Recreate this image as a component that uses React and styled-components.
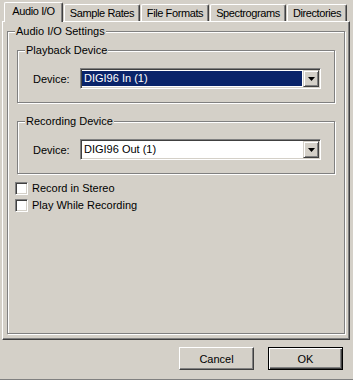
import React from "react";
import styled, { createGlobalStyle } from "styled-components";

const GlobalStyle = createGlobalStyle`
  html, body {
    margin: 0;
    padding: 0;
    background: #d4d0c8;
  }
  body {
    font-family: "Liberation Sans", Arial, sans-serif;
    font-size: 11px;
    color: #000;
  }
`;

const tabs = [
  { label: "Audio I/O", width: 59, active: true },
  { label: "Sample Rates", width: 76 },
  { label: "File Formats", width: 68 },
  { label: "Spectrograms", width: 76 },
  { label: "Directories", width: 60 },
];

function ComboBox({ value, selected }) {
  return (
    <StCombo>
      <StComboText $selected={selected}>{value}</StComboText>
      <StDropButton>
        <svg width="7" height="4" viewBox="0 0 7 4">
          <path d="M0 0h7L3.5 4z" fill="#000" />
        </svg>
      </StDropButton>
    </StCombo>
  );
}

function DeviceGroup({ title, value, selected }) {
  return (
    <StGroup $inner>
      <StLegend>{title}</StLegend>
      <StDeviceRow>
        <StLabel>Device:</StLabel>
        <ComboBox value={value} selected={selected} />
      </StDeviceRow>
    </StGroup>
  );
}

function App() {
  return (
    <StDialog>
      <GlobalStyle />
      <StTabStrip>
        {tabs.map((t, i) => (
          <StTab key={t.label} $active={t.active} $width={t.width} $first={i === 0}>
            {t.label}
          </StTab>
        ))}
      </StTabStrip>
      <StPanel>
        <StGroup>
          <StLegend>Audio I/O Settings</StLegend>
          <DeviceGroup title="Playback Device" value="DIGI96 In (1)" selected />
          <StGroupSpacer />
          <DeviceGroup title="Recording Device" value="DIGI96 Out (1)" />
          <StChecks>
            <StCheckRow>
              <StCheckBox />
              Record in Stereo
            </StCheckRow>
            <StCheckRow>
              <StCheckBox />
              Play While Recording
            </StCheckRow>
          </StChecks>
        </StGroup>
      </StPanel>
      <StFooter>
        <StButton>Cancel</StButton>
        <StButton $default>OK</StButton>
      </StFooter>
    </StDialog>
  );
}

export default App;

const StDialog = styled.div`
  width: 353px;
  height: 380px;
  box-sizing: border-box;
  border-bottom: 1px solid #808080;
  display: flex;
  flex-direction: column;
`;

const StTabStrip = styled.div`
  display: flex;
  align-items: flex-end;
  height: 21px;
  padding-left: 4px;
`;

const StTab = styled.div`
  box-sizing: border-box;
  position: relative;
  z-index: ${(p) => (p.$active ? 1 : 0)};
  width: ${(p) => p.$width}px;
  height: ${(p) => (p.$active ? 20 : 17)}px;
  margin-left: ${(p) => (p.$first ? 0 : 1)}px;
  margin-bottom: ${(p) => (p.$active ? -1 : 0)}px;
  padding-top: 2px;
  background: #d4d0c8;
  border-top: 1px solid #fff;
  border-left: 1px solid #fff;
  border-right: 1px solid #404040;
  border-radius: 2px 2px 0 0;
  box-shadow: inset -1px 0 0 #808080;
  line-height: 13px;
  letter-spacing: -0.4px;
  text-align: center;
  white-space: nowrap;
`;

const StPanel = styled.div`
  box-sizing: border-box;
  display: flex;
  flex-direction: column;
  width: 348px;
  height: 319px;
  margin-left: 2px;
  padding: 3px 4px 5px 4px;
  border-top: 1px solid #fff;
  border-left: 1px solid #fff;
  border-right: 1px solid #404040;
  border-bottom: 1px solid #404040;
  box-shadow: inset -1px -1px 0 #808080;
`;

const StGroup = styled.fieldset`
  flex: ${(p) => (p.$inner ? "none" : 1)};
  min-width: 0;
  margin: ${(p) => (p.$inner ? "0 1px 0 2px" : "0")};
  padding: ${(p) => (p.$inner ? "11px 13px 13px 7px" : "6px 8px 0 7px")};
  border: 1px solid #808080;
  box-shadow: 1px 1px 0 #fff, inset 1px 1px 0 #fff;
`;

const StLegend = styled.legend`
  padding: 0 1px;
  line-height: 13px;
  background: #d4d0c8;
`;

const StGroupSpacer = styled.div`
  height: 12px;
`;

const StDeviceRow = styled.div`
  display: flex;
  align-items: center;
  margin-left: 8px;
`;

const StLabel = styled.span`
  width: 47px;
  flex: none;
`;

const StCombo = styled.div`
  box-sizing: border-box;
  flex: 1;
  display: flex;
  height: 21px;
  padding: 1px;
  background: #fff;
  border: 1px solid;
  border-color: #808080 #fff #fff #808080;
  box-shadow: inset 1px 1px 0 #404040, inset -1px -1px 0 #d4d0c8;
`;

const StComboText = styled.div`
  flex: 1;
  margin: 1px 1px 1px 0;
  padding-left: 2px;
  line-height: 15px;
  background: ${(p) => (p.$selected ? "#0a246a" : "#fff")};
  color: ${(p) => (p.$selected ? "#fff" : "#000")};
  white-space: nowrap;
`;

const StDropButton = styled.div`
  box-sizing: border-box;
  width: 16px;
  height: 17px;
  display: flex;
  align-items: center;
  justify-content: center;
  background: #d4d0c8;
  border: 1px solid;
  border-color: #d4d0c8 #404040 #404040 #d4d0c8;
  box-shadow: inset 1px 1px 0 #fff, inset -1px -1px 0 #808080;
`;

const StChecks = styled.div`
  display: flex;
  flex-direction: column;
  margin-top: 6px;
`;

const StCheckRow = styled.label`
  display: flex;
  align-items: center;
  gap: 4px;
  height: 17px;
  line-height: 13px;
`;

const StCheckBox = styled.span`
  box-sizing: border-box;
  flex: none;
  width: 13px;
  height: 13px;
  background: #fff;
  border: 1px solid;
  border-color: #808080 #fff #fff #808080;
  box-shadow: inset 1px 1px 0 #404040, inset -1px -1px 0 #d4d0c8;
`;

const StFooter = styled.div`
  display: flex;
  justify-content: flex-end;
  gap: 14px;
  padding: 7px 10px 0 0;
`;

const StButton = styled.button`
  box-sizing: border-box;
  width: 75px;
  height: 23px;
  padding: 0;
  font: inherit;
  color: #000;
  background: #d4d0c8;
  border: 1px solid;
  border-color: ${(p) => (p.$default ? "#000" : "#fff #404040 #404040 #fff")};
  border-radius: 0;
  box-shadow: ${(p) =>
    p.$default
      ? "inset 1px 1px 0 #fff, inset -1px -1px 0 #404040, inset -2px -2px 0 #808080"
      : "inset -1px -1px 0 #808080"};
`;
